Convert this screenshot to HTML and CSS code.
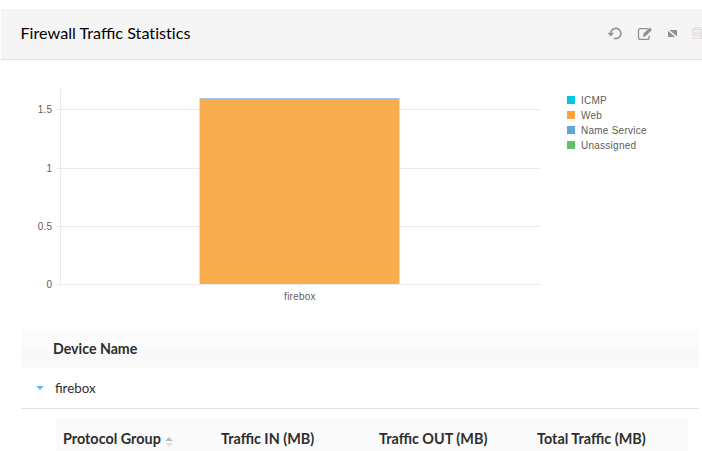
FILE: index.html
```html
<!DOCTYPE html>
<html lang="en">
<head>
<meta charset="utf-8">
<title>Firewall Traffic Statistics</title>
<link rel="stylesheet" href="styles.css">
</head>
<body>
<section class="widget">
  <header class="bar">
    <h1 class="title">Firewall Traffic <span class="plain">Statistics</span></h1>
    <svg class="tools" width="96" height="20" viewBox="0 0 96 20">
      <g fill="none" stroke="#8f9396">
        <path d="M4.7 9.5A5.1 5.1 0 1 1 7.9 14.2" stroke-width="1.6"/>
        <path d="M42 4.6H34.5Q32.5 4.6 32.5 6.6V13.4Q32.5 15.4 34.5 15.4H41.2Q43.2 15.4 43.2 13.4V11.5" stroke-width="1.3"/>
      </g>
      <path d="M1.5 8.8h6.6l-3.3 3.8z" fill="#8f9396"/>
      <path d="M36.8 13l.8-3.4 6-6.1 2.4 2.3-6.1 6.3z" fill="#8f9396"/>
      <path d="M63.4 6H71V12.6z" fill="#8f9396"/>
      <path d="M62 6.8V13H69.2z" fill="#8f9396"/>
      <path d="M85.5 5.5H96.5M88.7 5V3.5H93.7V5M87 6V14.5H95.3V6M89.2 7.5V12.5M91.2 7.5V12.5M93.2 7.5V12.5" fill="none" stroke="#e3dad7" stroke-width="1.1"/>
    </svg>
  </header>
  <div class="chart">
    <svg class="plot" width="541" height="269" viewBox="0 60 541 269">
      <g fill="#e9e9e9">
        <rect x="60" y="89" width="1" height="196"/>
        <rect x="56" y="109" width="484" height="1"/>
        <rect x="56" y="168" width="484" height="1"/>
        <rect x="56" y="226" width="484" height="1"/>
        <rect x="56" y="284" width="484" height="1"/>
        <rect x="299" y="284" width="1" height="4"/>
      </g>
      <rect x="199" y="98" width="201" height="186" fill="#fcd9ae"/>
      <rect x="200" y="99" width="199" height="185" fill="#f9ad4e"/>
      <g fill="#f8aa4c">
        <rect x="200" y="109" width="199" height="1"/>
        <rect x="200" y="168" width="199" height="1"/>
        <rect x="200" y="226" width="199" height="1"/>
      </g>
      <rect x="200" y="98" width="199" height="1" fill="#9fc7e5"/>
      <rect x="200" y="99" width="199" height="1" fill="#b6bcb4"/>
      <g class="ticks" text-anchor="end">
        <text x="52.3" y="113">1.5</text>
        <text x="52.3" y="172">1</text>
        <text x="52.3" y="230">0.5</text>
        <text x="52.3" y="288">0</text>
      </g>
      <text class="ticks" x="300" y="300" text-anchor="middle">firebox</text>
    </svg>
    <ul class="legend">
      <li><i class="swatch icmp"></i>ICMP</li>
      <li><i class="swatch web"></i>Web</li>
      <li><i class="swatch name"></i>Name Service</li>
      <li><i class="swatch none"></i>Unassigned</li>
    </ul>
  </div>
  <div class="table">
    <div class="head">Device Name</div>
    <div class="row"><i class="caret"></i>firebox</div>
    <div class="subhead">
      <span>Protocol Group<svg class="sort" width="8" height="10" viewBox="0 0 8 10"><path d="M0 4L4 0L8 4z" fill="#bdbdbd"/><path d="M0.5 6H8L4.3 10z" fill="#e2e2e2"/></svg></span>
      <span>Traffic IN (MB)</span>
      <span>Traffic OUT (MB)</span>
      <span>Total Traffic (MB)</span>
    </div>
  </div>
</section>
</body>
</html>
```

FILE: styles.css
```css
* { box-sizing: border-box; }
body {
  margin: 0;
  background: #fff;
  font-family: Lato, "Liberation Sans", sans-serif;
  overflow: hidden;
}
.widget { margin: 9px 0 0 1px; }
.bar {
  display: flex;
  align-items: center;
  justify-content: space-between;
  height: 51px;
  padding-left: 19.5px;
  background: #f5f5f5;
  border-bottom: 1px solid #e2e2e2;
}
.title { margin: 0; padding-bottom: 3px; font-size: 16.2px; font-weight: 400; color: #000; }
.plain { font-variant-ligatures: none; }
.tools { display: block; }
.chart { display: flex; height: 269px; margin-left: -1px; }
.plot { display: block; flex: none; }
.ticks { font: 10px "Liberation Sans", Arial, sans-serif; letter-spacing: 0.25px; fill: #606060; }
.legend {
  margin: 33px 0 0 26px;
  padding: 0;
  list-style: none;
  font: 10px/15px "Liberation Sans", Arial, sans-serif;
  letter-spacing: 0.25px;
  color: #5c5c5c;
}
.legend li { display: flex; align-items: center; height: 15px; white-space: nowrap; }
.swatch { width: 8px; height: 8px; margin: -1px 6px 0 0; }
.icmp { background: #00c4e4; }
.web { background: #fca338; }
.name { background: #5fa4dc; }
.none { background: #5ebf67; }
.table { margin: 0 3px 0 20px; font-size: 13.3px; color: #2e2e2e; }
.head {
  height: 39px;
  padding-left: 32px;
  line-height: 39px;
  font-size: 14.2px;
  font-weight: 700;
  background: linear-gradient(#fbfbfb 50%, #f8f8f8 60%, #fafafa);
}
.row {
  display: flex;
  align-items: center;
  height: 41px;
  padding-left: 15px;
  border-bottom: 1px solid #e0e0e0;
}
.caret {
  width: 8px;
  height: 4px;
  margin-right: 11px;
  background: #68b6f5;
  clip-path: polygon(0 0, 100% 0, 50% 100%);
}
.subhead {
  display: grid;
  grid-template-columns: repeat(4, 158px);
  width: 632px;
  height: 32px;
  margin: 10px 0 0 35px;
  padding-left: 7px;
  line-height: 39px;
  font-size: 14.4px;
  font-weight: 700;
  background: #fafafa;
}
.sort { margin-left: 4px; vertical-align: -3px; }
```
